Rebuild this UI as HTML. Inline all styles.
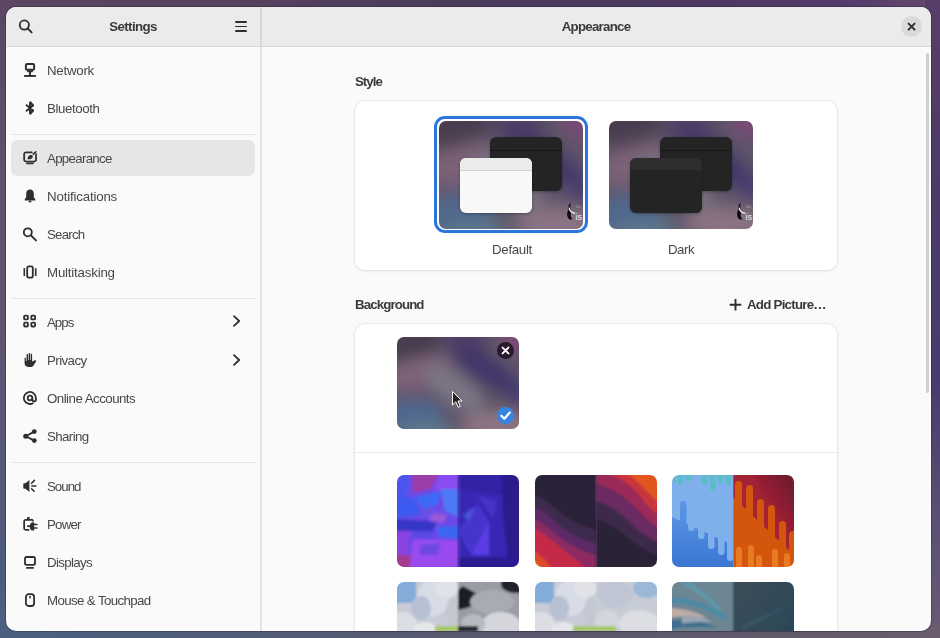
<!DOCTYPE html>
<html><head><meta charset="utf-8">
<style>
*{margin:0;padding:0;box-sizing:border-box}
html,body{width:940px;height:638px;overflow:hidden}
body{position:relative;font-family:"Liberation Sans",sans-serif;background:radial-gradient(ellipse 45% 40% at 22% 52%, rgba(140,100,130,.75), rgba(140,100,130,0) 100%),radial-gradient(ellipse 50% 40% at 18% 95%, rgba(70,120,160,.9), rgba(70,120,160,0) 100%),radial-gradient(ellipse 45% 45% at 85% 95%, rgba(150,120,135,.9), rgba(150,120,135,0) 100%),radial-gradient(ellipse 40% 45% at 80% 45%, rgba(60,50,110,.9), rgba(60,50,110,0) 100%),radial-gradient(ellipse 30% 25% at 95% 5%, rgba(140,80,120,.8), rgba(140,80,120,0) 100%),radial-gradient(ellipse 40% 30% at 60% 5%, rgba(90,55,110,.8), rgba(90,55,110,0) 100%),linear-gradient(135deg,#4a3c50 0%,#6a5870 40%,#6a6880 60%,#7a7088 100%)}
.abs{position:absolute}
.t{position:absolute;white-space:nowrap;color:#48484c;will-change:transform}
.card{position:absolute;background:#fff;border-radius:10px;box-shadow:0 0 0 1px rgba(0,0,6,.035),0 1px 3px 1px rgba(0,0,6,.05)}
</style></head><body>
<svg width="0" height="0" style="position:absolute"><defs><filter id="wblur" x="-20%" y="-20%" width="140%" height="140%"><feGaussianBlur stdDeviation="7"/></filter></defs></svg>
<div class="abs" style="left:0;top:0;width:940px;height:12px;background:linear-gradient(90deg,#5a4662 0%,#54425e 25%,#4a3a5a 50%,#4c3862 75%,#523c6a 90%,#66486e 100%)"></div><div class="abs" style="left:0;top:0;width:12px;height:638px;background:linear-gradient(180deg,#5a4662 0%,#62506c 30%,#5e5472 55%,#50587a 80%,#4a6080 100%)"></div><div class="abs" style="left:925px;top:0;width:15px;height:638px;background:linear-gradient(180deg,#583e6a 0%,#4c3a66 30%,#483c6c 60%,#5a4e74 80%,#6a5a72 100%)"></div><div class="abs" style="left:0;top:625px;width:940px;height:13px;background:linear-gradient(90deg,#4a6080 0%,#525c76 30%,#5a5a70 50%,#605a6c 75%,#6a5c6c 100%)"></div><div class="abs" style="left:6px;top:7px;width:925px;height:624px;border-radius:10px;background:#fafafa;overflow:hidden;box-shadow:0 0 0 1px rgba(20,10,30,.25)"><div class="abs" style="left:0;top:0;width:925px;height:39px;background:#ebebeb"></div><div class="abs" style="left:0;top:39px;width:925px;height:1px;background:#d9d9d9"></div><div class="abs" style="left:254px;top:0;width:2px;height:624px;background:#e4e4e4"></div><div class="abs" style="left:254px;top:0;width:2px;height:40px;background:#d8d8d8"></div></div><svg class="abs" style="left:16px;top:17px;width:18px;height:18px;" viewBox="0 0 18 18" fill="#2e2e32" stroke="#2e2e32"><circle cx="8.35" cy="8.05" r="4.6" fill="none" stroke-width="1.8"/><path d="M11.6 11.4 L15.6 15.4" stroke-width="2" stroke-linecap="round"/></svg><div class="abs" style="left:235px;top:21.2px;width:12px;height:1.9px;background:#2e2e32;border-radius:1px"></div><div class="abs" style="left:235px;top:25.5px;width:12px;height:1.9px;background:#2e2e32;border-radius:1px"></div><div class="abs" style="left:235px;top:29.8px;width:12px;height:1.9px;background:#2e2e32;border-radius:1px"></div><div class="t" style="top:16.89px;font-size:13.3px;line-height:20px;font-weight:bold;letter-spacing:-0.6px;color:#3a3a3d;left:-66.80000000000001px;width:400px;text-align:center;">Settings</div><div class="t" style="top:16.89px;font-size:13.3px;line-height:20px;font-weight:bold;letter-spacing:-0.75px;color:#3a3a3d;left:395.79999999999995px;width:400px;text-align:center;">Appearance</div><div class="abs" style="left:901px;top:16px;width:21px;height:21px;border-radius:50%;background:#dadada"></div><svg class="abs" style="left:903px;top:18px;width:17px;height:17px;" viewBox="0 0 17 17" fill="#2e2e32" stroke="#2e2e32"><path d="M5.6 5.6 L11.6 11.6 M11.6 5.6 L5.6 11.6" stroke-width="2" stroke-linecap="round" fill="none"/></svg><div class="abs" style="left:11px;top:140px;width:244px;height:36px;border-radius:6px;background:#e6e6e6"></div><div class="abs" style="left:12px;top:134px;width:243px;height:1px;background:#e4e4e4"></div><div class="abs" style="left:12px;top:298px;width:243px;height:1px;background:#e4e4e4"></div><div class="abs" style="left:12px;top:462px;width:243px;height:1px;background:#e4e4e4"></div><div class="t" style="top:61.29px;font-size:13.3px;line-height:20px;letter-spacing:-0.25px;color:#48484c;left:47.4px;">Network</div><svg class="abs" style="left:22px;top:62px;width:16px;height:16px;" viewBox="0 0 16 16" fill="#2e2e32" stroke="#2e2e32"><rect x="3.9" y="2" width="8.2" height="5.8" rx="1.2" fill="none" stroke-width="2"/><path d="M4.8 8.4 H11.2 L10.6 10.2 H5.4 Z" stroke="none"/><rect x="7.1" y="9" width="1.9" height="4.5" stroke="none"/><rect x="2.1" y="13" width="11.8" height="1.9" stroke="none"/></svg><div class="t" style="top:99.09px;font-size:13.3px;line-height:20px;letter-spacing:-0.4px;color:#48484c;left:47.4px;">Bluetooth</div><svg class="abs" style="left:22px;top:100px;width:16px;height:16px;" viewBox="0 0 16 16" fill="#2e2e32" stroke="#2e2e32"><path d="M4.6 5.2 L11.2 10.6 L8.2 13.8 L8.2 2.2 L11.2 5.4 L4.6 10.8" fill="none" stroke-width="1.9" stroke-linejoin="round" stroke-linecap="round"/><path d="M8.2 2.6 V13.4" stroke-width="2.4"/></svg><div class="t" style="top:148.69px;font-size:13.3px;line-height:20px;letter-spacing:-0.7px;color:#48484c;left:47.4px;">Appearance</div><svg class="abs" style="left:22px;top:150px;width:16px;height:16px;" viewBox="0 0 16 16" fill="#2e2e32" stroke="#2e2e32"><path d="M9.8 2.25 H4 A1.85 1.85 0 0 0 2.15 4.1 V9.65 A1.85 1.85 0 0 0 4 11.5 H12.2 A1.85 1.85 0 0 0 14.05 9.65 V4.2" fill="none" stroke-width="1.75" stroke-linecap="round"/><rect x="4.1" y="12.7" width="7.7" height="1.45" rx=".7" stroke="none"/><path d="M5.6 9.3 C5.4 6.8 6.9 4.9 9 4.9 C10.6 4.9 11.2 6.2 10.6 7.4 C9.9 8.9 7.6 9.5 5.6 9.3 Z" stroke="none"/><path d="M11.3 4.1 L13.8 1.9" stroke-width="1.6" stroke-linecap="round"/></svg><div class="t" style="top:186.79px;font-size:13.3px;line-height:20px;letter-spacing:-0.18px;color:#48484c;left:47.4px;">Notifications</div><svg class="abs" style="left:22px;top:188px;width:16px;height:16px;" viewBox="0 0 16 16" fill="#2e2e32" stroke="#2e2e32"><path d="M8 1.5 C5.5 1.5 4.2 3.4 4.2 5.8 V9.3 L2.7 11.3 V12.6 H13.3 V11.3 L11.8 9.3 V5.8 C11.8 3.4 10.5 1.5 8 1.5Z" stroke="none"/><ellipse cx="8" cy="13.5" rx="1.5" ry=".9" stroke="none"/></svg><div class="t" style="top:224.99px;font-size:13.3px;line-height:20px;letter-spacing:-0.8px;color:#48484c;left:47.4px;">Search</div><svg class="abs" style="left:22px;top:226px;width:16px;height:16px;" viewBox="0 0 16 16" fill="#2e2e32" stroke="#2e2e32"><circle cx="5.8" cy="6.3" r="4" fill="none" stroke-width="1.8"/><path d="M8.9 9.4 L14 14.4" stroke-width="2" stroke-linecap="round"/></svg><div class="t" style="top:262.99px;font-size:13.3px;line-height:20px;letter-spacing:-0.2px;color:#48484c;left:47.4px;">Multitasking</div><svg class="abs" style="left:22px;top:264px;width:16px;height:16px;" viewBox="0 0 16 16" fill="#2e2e32" stroke="#2e2e32"><rect x="5.2" y="2.4" width="5.6" height="11.3" rx="1.6" fill="none" stroke-width="1.8"/><rect x="1.5" y="4.2" width="1.6" height="7.8" stroke="none"/><rect x="12.9" y="4.2" width="1.6" height="7.8" stroke="none"/></svg><div class="t" style="top:312.99px;font-size:13.3px;line-height:20px;letter-spacing:-1.0px;color:#48484c;left:47.4px;">Apps</div><svg class="abs" style="left:22px;top:314px;width:16px;height:16px;" viewBox="0 0 16 16" fill="#2e2e32" stroke="#2e2e32"><rect x="2.1" y="1.6" width="3.8" height="3.8" rx="1" fill="none" stroke-width="1.8"/><rect x="9.3" y="1.6" width="3.8" height="3.8" rx="1" fill="none" stroke-width="1.8"/><rect x="2.1" y="8.7" width="3.8" height="3.8" rx="1" fill="none" stroke-width="1.8"/><rect x="9.3" y="8.7" width="3.8" height="3.8" rx="1" fill="none" stroke-width="1.8"/></svg><div class="t" style="top:350.99px;font-size:13.3px;line-height:20px;letter-spacing:-0.58px;color:#48484c;left:47.4px;">Privacy</div><svg class="abs" style="left:22px;top:352px;width:16px;height:16px;" viewBox="0 0 16 16" fill="#2e2e32" stroke="#2e2e32"><path d="M2.6 6 C2.6 5.2 3.9 5.2 3.9 6 V9 H4.6 V2.6 C4.6 1.8 6 1.8 6 2.6 V8 H6.6 V1.6 C6.6 0.7 8.1 0.7 8.1 1.6 V8 H8.7 V2.4 C8.7 1.6 10.1 1.6 10.1 2.4 V9.6 L12.3 8.4 C13.3 7.9 14.6 8.6 14 9.5 L11.5 13.4 C10.7 14.5 9.7 14.9 8.4 14.9 H6.3 C4 14.9 2.6 13.5 2.6 11.3 Z" stroke="none"/></svg><div class="t" style="top:388.79px;font-size:13.3px;line-height:20px;letter-spacing:-0.53px;color:#48484c;left:47.4px;">Online Accounts</div><svg class="abs" style="left:22px;top:390px;width:16px;height:16px;" viewBox="0 0 16 16" fill="#2e2e32" stroke="#2e2e32"><path d="M11.3 12.9 A6 6 0 1 1 13.9 8 V9.4 C13.9 10.6 13.2 11.3 12.2 11.3 C11.2 11.3 10.4 10.6 10.4 9.4 V8" fill="none" stroke-width="1.8"/><circle cx="8" cy="8" r="2.3" fill="none" stroke-width="1.8"/></svg><div class="t" style="top:427.19px;font-size:13.3px;line-height:20px;letter-spacing:-0.6px;color:#48484c;left:47.4px;">Sharing</div><svg class="abs" style="left:22px;top:428px;width:16px;height:16px;" viewBox="0 0 16 16" fill="#2e2e32" stroke="#2e2e32"><path d="M3.8 8.2 L12.2 3.6 M3.8 8.2 L12.2 12.6" fill="none" stroke-width="1.8"/><circle cx="3.7" cy="8.2" r="2.5" stroke="none"/><circle cx="12.3" cy="3.6" r="2.4" stroke="none"/><circle cx="12.3" cy="12.6" r="2.4" stroke="none"/></svg><div class="t" style="top:476.79px;font-size:13.3px;line-height:20px;letter-spacing:-1.0px;color:#48484c;left:47.4px;">Sound</div><svg class="abs" style="left:22px;top:478px;width:16px;height:16px;" viewBox="0 0 16 16" fill="#2e2e32" stroke="#2e2e32"><path d="M1.3 6.3 C1.3 5.6 1.8 5.3 2.4 5.3 H3.5 L7.4 2 V14 L3.5 10.7 H2.4 C1.8 10.7 1.3 10.4 1.3 9.7 Z" stroke="none"/><path d="M9.6 5.2 L12.4 2.4 M9.8 8 H13.9 M9.6 10.8 L12 13.2" stroke-width="1.6" stroke-linecap="round" fill="none"/></svg><div class="t" style="top:514.79px;font-size:13.3px;line-height:20px;letter-spacing:-0.8px;color:#48484c;left:47.4px;">Power</div><svg class="abs" style="left:22px;top:516px;width:16px;height:16px;" viewBox="0 0 16 16" fill="#2e2e32" stroke="#2e2e32"><rect x="5" y="1.1" width="2.6" height="2" rx=".5" stroke="none"/><path d="M6.6 13.75 H3.6 A1.5 1.5 0 0 1 2.15 12.25 V5.2 A1.5 1.5 0 0 1 3.6 3.75 H9.2 A1.9 1.9 0 0 1 10.9 4.7" fill="none" stroke-width="1.75" stroke-linecap="round"/><path d="M12.1 6.2 V14.6 H11 C9 14.6 7.7 12.8 7.7 10.4 C7.7 8 9 6.2 11 6.2 Z" stroke="none"/><path d="M5 10.2 H8.5" stroke-width="1.6"/><path d="M12 8.5 H14.9 M12 12 H14.9" stroke-width="1.5" stroke-linecap="round"/></svg><div class="t" style="top:552.79px;font-size:13.3px;line-height:20px;letter-spacing:-0.64px;color:#48484c;left:47.4px;">Displays</div><svg class="abs" style="left:22px;top:554px;width:16px;height:16px;" viewBox="0 0 16 16" fill="#2e2e32" stroke="#2e2e32"><rect x="3" y="3" width="10" height="7.8" rx="1.6" fill="none" stroke-width="1.8"/><rect x="4" y="13" width="8" height="1.8" rx=".9" stroke="none"/></svg><div class="t" style="top:590.79px;font-size:13.3px;line-height:20px;letter-spacing:-0.63px;color:#48484c;left:47.4px;">Mouse &amp; Touchpad</div><svg class="abs" style="left:22px;top:592px;width:16px;height:16px;" viewBox="0 0 16 16" fill="#2e2e32" stroke="#2e2e32"><rect x="3.9" y="2.2" width="8.2" height="11.8" rx="2.8" fill="none" stroke-width="1.8"/><rect x="7.3" y="3.8" width="1.4" height="2.6" rx=".5" stroke="none"/></svg><svg class="abs" style="left:228px;top:313px;width:16px;height:16px;" viewBox="0 0 16 16" fill="#2e2e32" stroke="#2e2e32"><path d="M6 3.2 L11.2 8 L6 12.8" fill="none" stroke-width="1.8" stroke-linecap="round" stroke-linejoin="round"/></svg><svg class="abs" style="left:228px;top:352px;width:16px;height:16px;" viewBox="0 0 16 16" fill="#2e2e32" stroke="#2e2e32"><path d="M6 3.2 L11.2 8 L6 12.8" fill="none" stroke-width="1.8" stroke-linecap="round" stroke-linejoin="round"/></svg><div class="t" style="top:72.39px;font-size:13.3px;line-height:20px;font-weight:bold;letter-spacing:-1.0px;color:#3a3a3d;left:355.1px;">Style</div><div class="card" style="left:355px;top:101px;width:482px;height:169px"></div><div class="abs" style="left:434px;top:116px;width:154px;height:117px;border:3px solid #2a76dc;border-radius:11px"></div><div class="abs" style="left:439px;top:121px;width:144px;height:108px;border-radius:7px;overflow:hidden"><svg class="abs" style="left:0;top:0;width:144px;height:108px" viewBox="0 0 120 90" preserveAspectRatio="none"><g filter="url(#wblur)"><rect x="-20" y="-20" width="160" height="130" fill="#5e5468"/>
<ellipse cx="5" cy="0" rx="40" ry="22" fill="#483e50"/>
<ellipse cx="22" cy="36" rx="34" ry="16" fill="#7c6278" transform="rotate(-15 22 36)"/>
<ellipse cx="56" cy="52" rx="34" ry="14" fill="#7a7484" transform="rotate(35 58 52)"/>
<ellipse cx="86" cy="30" rx="46" ry="13" fill="#40366a" transform="rotate(36 86 30)"/>
<ellipse cx="68" cy="4" rx="22" ry="10" fill="#4e3a66"/>
<ellipse cx="120" cy="0" rx="18" ry="14" fill="#7a4a78"/>
<ellipse cx="10" cy="78" rx="36" ry="16" fill="#50688e" transform="rotate(-8 10 78)"/>
<ellipse cx="30" cy="92" rx="28" ry="8" fill="#5e7c8c"/>
<ellipse cx="98" cy="86" rx="34" ry="14" fill="#8c7484"/>
<ellipse cx="120" cy="55" rx="10" ry="14" fill="#4a3e70"/></g></svg><div class="abs" style="left:51px;top:16px;width:72px;height:54px;border-radius:6px;background:#242424;box-shadow:0 1px 3px rgba(0,0,0,.3)"><div class="abs" style="left:0;top:12.5px;width:72px;height:1px;background:#151515"></div></div><div class="abs" style="left:21px;top:37px;width:72px;height:55px;border-radius:6px;background:#f8f8f8;box-shadow:0 1px 3px rgba(0,0,0,.3)"><div class="abs" style="left:0;top:0;width:72px;height:13px;background:#ebebeb;border-radius:6px 6px 0 0;border-bottom:1px solid #d0d0d0"></div></div><svg class="abs" style="left:127px;top:80px;width:17px;height:22px" viewBox="0 0 17 22"><path d="M4.6 1.5 C2.6 3.5 2 6.5 2.6 8.6 C1 10.8 0.6 14 1.8 16.4 C2.8 18.3 4.8 19 6.6 18.4 C4.6 16.4 4 13.4 5.4 11.2 C4.2 9 4 5.8 4.6 1.5 Z" fill="#0e0a10"/><path d="M3.2 6.6 C3.4 9.6 5.6 11.8 9.2 12.4" stroke="#f0f0f0" stroke-width="1.2" fill="none"/><text x="9.6" y="18.6" font-size="9" fill="#eee" font-family="Liberation Sans">is</text><text x="10" y="7" font-size="3.5" fill="#bbb" font-family="Liberation Sans">Os</text></svg></div><div class="abs" style="left:609px;top:121px;width:144px;height:108px;border-radius:7px;overflow:hidden"><svg class="abs" style="left:0;top:0;width:144px;height:108px" viewBox="0 0 120 90" preserveAspectRatio="none"><g filter="url(#wblur)"><rect x="-20" y="-20" width="160" height="130" fill="#5e5468"/>
<ellipse cx="5" cy="0" rx="40" ry="22" fill="#483e50"/>
<ellipse cx="22" cy="36" rx="34" ry="16" fill="#7c6278" transform="rotate(-15 22 36)"/>
<ellipse cx="56" cy="52" rx="34" ry="14" fill="#7a7484" transform="rotate(35 58 52)"/>
<ellipse cx="86" cy="30" rx="46" ry="13" fill="#40366a" transform="rotate(36 86 30)"/>
<ellipse cx="68" cy="4" rx="22" ry="10" fill="#4e3a66"/>
<ellipse cx="120" cy="0" rx="18" ry="14" fill="#7a4a78"/>
<ellipse cx="10" cy="78" rx="36" ry="16" fill="#50688e" transform="rotate(-8 10 78)"/>
<ellipse cx="30" cy="92" rx="28" ry="8" fill="#5e7c8c"/>
<ellipse cx="98" cy="86" rx="34" ry="14" fill="#8c7484"/>
<ellipse cx="120" cy="55" rx="10" ry="14" fill="#4a3e70"/></g></svg><div class="abs" style="left:51px;top:16px;width:72px;height:54px;border-radius:6px;background:#242424;box-shadow:0 1px 3px rgba(0,0,0,.3)"><div class="abs" style="left:0;top:12.5px;width:72px;height:1px;background:#151515"></div></div><div class="abs" style="left:21px;top:37px;width:72px;height:55px;border-radius:6px;background:#242424;box-shadow:0 1px 3px rgba(0,0,0,.3)"><div class="abs" style="left:0;top:0;width:72px;height:12px;background:#2e2e2e;border-radius:6px 6px 0 0"></div></div><svg class="abs" style="left:127px;top:80px;width:17px;height:22px" viewBox="0 0 17 22"><path d="M4.6 1.5 C2.6 3.5 2 6.5 2.6 8.6 C1 10.8 0.6 14 1.8 16.4 C2.8 18.3 4.8 19 6.6 18.4 C4.6 16.4 4 13.4 5.4 11.2 C4.2 9 4 5.8 4.6 1.5 Z" fill="#0e0a10"/><path d="M3.2 6.6 C3.4 9.6 5.6 11.8 9.2 12.4" stroke="#f0f0f0" stroke-width="1.2" fill="none"/><text x="9.6" y="18.6" font-size="9" fill="#eee" font-family="Liberation Sans">is</text><text x="10" y="7" font-size="3.5" fill="#bbb" font-family="Liberation Sans">Os</text></svg></div><div class="t" style="top:240.39px;font-size:13.3px;line-height:20px;letter-spacing:-0.3px;color:#48484c;left:311.5px;width:400px;text-align:center;">Default</div><div class="t" style="top:240.39px;font-size:13.3px;line-height:20px;letter-spacing:-0.5px;color:#48484c;left:481px;width:400px;text-align:center;">Dark</div><div class="t" style="top:295.09px;font-size:13.3px;line-height:20px;font-weight:bold;letter-spacing:-0.9px;color:#3a3a3d;left:355.2px;">Background</div><svg class="abs" style="left:728px;top:297px;width:15px;height:15px;" viewBox="0 0 15 15" fill="#2e2e32" stroke="#2e2e32"><path d="M7.5 2 V13.6 M1.7 7.8 H13.3" stroke-width="1.9" fill="none"/></svg><div class="t" style="top:295.09px;font-size:13.3px;line-height:20px;font-weight:bold;letter-spacing:-0.75px;color:#3a3a3d;left:747.4px;">Add Picture…</div><div class="card" style="left:355px;top:324px;width:482px;height:307px;border-radius:10px 10px 0 0"></div><div class="abs" style="left:355px;top:452px;width:482px;height:1px;background:#ebebeb"></div><div class="abs" style="left:397px;top:337px;width:122px;height:92px;border-radius:7px;overflow:hidden"><svg class="abs" style="left:0;top:0;width:122px;height:92px" viewBox="0 0 120 90" preserveAspectRatio="none"><g filter="url(#wblur)"><rect x="-20" y="-20" width="160" height="130" fill="#5e5468"/>
<ellipse cx="5" cy="0" rx="40" ry="22" fill="#483e50"/>
<ellipse cx="22" cy="36" rx="34" ry="16" fill="#7c6278" transform="rotate(-15 22 36)"/>
<ellipse cx="56" cy="52" rx="34" ry="14" fill="#7a7484" transform="rotate(35 58 52)"/>
<ellipse cx="86" cy="30" rx="46" ry="13" fill="#40366a" transform="rotate(36 86 30)"/>
<ellipse cx="68" cy="4" rx="22" ry="10" fill="#4e3a66"/>
<ellipse cx="120" cy="0" rx="18" ry="14" fill="#7a4a78"/>
<ellipse cx="10" cy="78" rx="36" ry="16" fill="#50688e" transform="rotate(-8 10 78)"/>
<ellipse cx="30" cy="92" rx="28" ry="8" fill="#5e7c8c"/>
<ellipse cx="98" cy="86" rx="34" ry="14" fill="#8c7484"/>
<ellipse cx="120" cy="55" rx="10" ry="14" fill="#4a3e70"/></g></svg><svg class="abs" style="left:104px;top:64px;width:18px;height:22px" viewBox="0 0 18 22"><text x="2" y="10" font-size="6" fill="#ddd" font-family="Liberation Sans">is</text></svg></div><div class="abs" style="left:496.5px;top:341.9px;width:17px;height:17px;border-radius:50%;background:#2a1a2c"></div><svg class="abs" style="left:496.5px;top:341.9px;width:17px;height:17px;" viewBox="0 0 17 17" fill="#2e2e32" stroke="#2e2e32"><path d="M5.6 5.6 L11.4 11.4 M11.4 5.6 L5.6 11.4" stroke="#fff" stroke-width="2" stroke-linecap="round" fill="none"/></svg><div class="abs" style="left:496.5px;top:406.8px;width:17px;height:17px;border-radius:50%;background:#3584e4"></div><svg class="abs" style="left:496.5px;top:406.8px;width:17px;height:17px;" viewBox="0 0 17 17" fill="#2e2e32" stroke="#2e2e32"><path d="M4.3 8.8 L7.3 11.8 L12.8 5.6" stroke="#fff" stroke-width="2.2" stroke-linecap="round" stroke-linejoin="round" fill="none"/></svg><svg class="abs" style="left:451px;top:390px;width:12px;height:20px;" viewBox="0 0 12 20" fill="#2e2e32" stroke="#2e2e32"><path d="M1.5 1.5 V15 L4.8 11.8 L7.3 17.3 L9.3 16.4 L6.9 11 H11 Z" fill="#222" stroke="#fff" stroke-width="1"/></svg><div class="abs" style="left:397px;top:475px;width:122px;height:92px;border-radius:7px;overflow:hidden"><svg width="122" height="92" viewBox="0 0 122 92" style="display:block"><defs><filter id="b1" x="-10%" y="-10%" width="120%" height="120%"><feGaussianBlur stdDeviation="1.4"/></filter></defs>
<g filter="url(#b1)">
<rect x="-5" y="-5" width="70" height="102" fill="#6a4ae8"/>
<polygon points="-5,-5 14,-5 10,22 -5,26" fill="#4a56ee"/>
<polygon points="14,-5 44,-5 34,14 16,18" fill="#9c3ca8"/>
<polygon points="44,-5 66,-5 66,14 36,16" fill="#8a4cf0"/>
<polygon points="-5,24 18,22 24,40 -5,44" fill="#3c5af0"/>
<polygon points="18,22 44,16 40,30 26,34" fill="#3a6af6"/>
<polygon points="44,14 66,14 66,44 48,36" fill="#4c7af4"/>
<polygon points="26,34 48,36 44,44 24,42" fill="#6a50e4"/>
<polygon points="-5,44 40,46 36,56 -5,56" fill="#3434c8"/>
<polygon points="36,38 50,40 46,48 32,46" fill="#9a58d8"/>
<polygon points="40,52 66,50 66,64 42,62" fill="#3a66f2"/>
<polygon points="14,56 40,56 34,66 10,66" fill="#5a4ae6"/>
<polygon points="-5,56 14,56 10,80 -5,80" fill="#8a42e0"/>
<polygon points="-5,80 16,80 12,97 -5,97" fill="#a43a90"/>
<polygon points="16,64 66,66 66,97 12,97" fill="#9a4cf0"/>
<polygon points="24,70 44,68 40,80 22,80" fill="#6a48e0"/>
<rect x="61" y="-5" width="66" height="102" fill="#3828b4"/>
<polygon points="61,-5 127,-5 127,22 61,14" fill="#3024a4"/>
<polygon points="104,-5 127,-5 127,97 112,97 106,40" fill="#2a1a8a"/>
<polygon points="74,80 92,46 92,80" fill="#5a3ee4"/>
<polygon points="61,56 80,28 92,46 74,80" fill="#4434cc"/>
<polygon points="61,82 127,82 127,97 61,97" fill="#2c1c90"/>
<polygon points="66,40 78,32 72,46" fill="#4a56d8"/>
<polygon points="80,20 100,26 96,44" fill="#4632c8"/>
</g>
<rect x="61" y="0" width="0.7" height="92" fill="#2a2090" opacity=".6"/></svg></div><div class="abs" style="left:534.5px;top:475px;width:122px;height:92px;border-radius:7px;overflow:hidden"><svg width="122" height="92" viewBox="0 0 122 92" style="display:block"><defs><filter id="b2" x="-10%" y="-10%" width="120%" height="120%"><feGaussianBlur stdDeviation="1.0"/></filter></defs>
<g filter="url(#b2)">
<rect x="-5" y="-5" width="70" height="102" fill="#2c2438"/>
<path d="M-5 18 C8 22 16 30 26 38 C36 46 48 52 66 56 V97 H-5Z" fill="#3c2a4e"/>
<path d="M-5 30 C8 34 16 42 24 50 C34 58 46 66 66 70 V97 H-5Z" fill="#5c2c66"/>
<path d="M-5 42 C6 46 14 54 22 60 C32 68 44 76 66 82 V97 H-5Z" fill="#8e2c62"/>
<path d="M-5 52 C6 56 12 62 20 68 C30 76 40 84 56 97 H-5Z" fill="#c42c46"/>
<path d="M-5 74 C4 78 10 84 14 90 L18 97 H-5Z" fill="#dc4a2c"/>
<path d="M-5 82 C0 84 4 88 8 97 H-5Z" fill="#e6641c"/>
<rect x="61" y="-5" width="66" height="102" fill="#2a2234"/>
<path d="M61 -5 H127 V82 C112 78 100 68 90 60 C80 52 70 46 61 44Z" fill="#3e2a4c"/>
<path d="M61 -5 H127 V68 C112 64 102 54 94 46 C86 38 74 30 61 26Z" fill="#6a2c62"/>
<path d="M61 -5 H127 V54 C116 50 108 40 100 32 C92 24 80 14 61 8Z" fill="#9a2a58"/>
<path d="M72 -5 H127 V42 C118 38 110 28 104 20 C98 12 88 4 72 -2Z" fill="#c8343e"/>
<path d="M84 -5 H127 V30 C120 26 112 16 104 8 C98 2 92 -2 84 -4Z" fill="#e0561e"/>
</g>
<rect x="61" y="0" width="0.8" height="92" fill="#6a4a7a" opacity=".5"/></svg></div><div class="abs" style="left:672px;top:475px;width:122px;height:92px;border-radius:7px;overflow:hidden"><svg width="122" height="92" viewBox="0 0 122 92" style="display:block"><defs><filter id="b3" x="-10%" y="-10%" width="120%" height="120%"><feGaussianBlur stdDeviation="0.6"/></filter>
<linearGradient id="g3a" gradientUnits="userSpaceOnUse" x1="0" y1="30" x2="0" y2="92"><stop offset="0" stop-color="#5a96e6"/><stop offset="1" stop-color="#3a76d2"/></linearGradient>
<linearGradient id="g3b" x1="0" y1="1" x2="1" y2="0"><stop offset="0" stop-color="#c02838"/><stop offset=".6" stop-color="#a02034"/><stop offset="1" stop-color="#5a1a2c"/></linearGradient>
<linearGradient id="g3c" x1="0" y1="0" x2="0" y2="1"><stop offset="0" stop-color="#d8580e"/><stop offset="1" stop-color="#e0581a"/></linearGradient>
</defs>
<g filter="url(#b3)">
<rect x="-5" y="-5" width="70" height="102" fill="#80b0ec"/><path d="M-5 40 L61 70 V97 H-5Z" fill="url(#g3a)"/><rect x="8" y="26" width="6.5" height="130" rx="3.25" fill="url(#g3a)"/><rect x="16" y="-74" width="6.5" height="130" rx="3.25" fill="#80b0ec"/><rect x="26" y="-66" width="6.5" height="130" rx="3.25" fill="#80b0ec"/><rect x="36" y="-56" width="6.5" height="130" rx="3.25" fill="#80b0ec"/><rect x="46" y="-50" width="6.5" height="130" rx="3.25" fill="#80b0ec"/><rect x="55" y="-44" width="6.5" height="130" rx="3.25" fill="#80b0ec"/><rect x="-2" y="-122" width="5.5" height="130" rx="2.75" fill="#5cbcc8"/><rect x="6" y="-120" width="5.5" height="130" rx="2.75" fill="#5cbcc8"/><rect x="14" y="-124" width="5.5" height="130" rx="2.75" fill="#5cbcc8"/><rect x="30" y="-120" width="5.5" height="130" rx="2.75" fill="#5cbcc8"/><rect x="38" y="-114" width="5.5" height="130" rx="2.75" fill="#5cbcc8"/><rect x="46" y="-122" width="5.5" height="130" rx="2.75" fill="#5cbcc8"/><rect x="54" y="-120" width="5.5" height="130" rx="2.75" fill="#5cbcc8"/><rect x="61" y="-5" width="66" height="102" fill="url(#g3b)"/>
<path d="M61 22 L122 80 V97 H61Z" fill="#d4560e"/><rect x="63" y="6" width="7" height="130" rx="3.5" fill="#d4560e"/><rect x="74" y="10" width="7" height="130" rx="3.5" fill="#d4560e"/><rect x="85" y="24" width="7" height="130" rx="3.5" fill="#d4560e"/><rect x="96" y="30" width="7" height="130" rx="3.5" fill="#d4560e"/><rect x="107" y="46" width="7" height="130" rx="3.5" fill="#d4560e"/><rect x="117" y="56" width="7" height="130" rx="3.5" fill="#d4560e"/><rect x="64" y="72" width="6" height="130" rx="3.0" fill="#e87a22"/><rect x="76" y="70" width="6" height="130" rx="3.0" fill="#e87a22"/><rect x="84" y="80" width="6" height="130" rx="3.0" fill="#e87a22"/><rect x="100" y="74" width="6" height="130" rx="3.0" fill="#e87a22"/><rect x="112" y="78" width="6" height="130" rx="3.0" fill="#e87a22"/></g><rect x="61" y="0" width="0.8" height="92" fill="#fff" opacity=".2"/></svg></div><div class="abs" style="left:397px;top:582px;width:122px;height:49px;border-radius:7px 7px 0 0;overflow:hidden"><svg width="122" height="92" viewBox="0 0 122 92" style="display:block"><defs><filter id="b4" x="-10%" y="-10%" width="120%" height="120%"><feGaussianBlur stdDeviation="1.3"/></filter></defs><g filter="url(#b4)"><rect x="-5" y="-5" width="70" height="102" fill="#c8ccd6"/>
<rect x="-5" y="-5" width="24" height="26" fill="#84acd8"/>
<ellipse cx="36" cy="16" rx="16" ry="18" fill="#d8dce6"/>
<ellipse cx="24" cy="26" rx="10" ry="12" fill="#b8c0d4"/>
<ellipse cx="50" cy="6" rx="12" ry="10" fill="#e0e2e8"/>
<ellipse cx="6" cy="42" rx="14" ry="12" fill="#dcdee4"/>
<ellipse cx="28" cy="48" rx="12" ry="8" fill="#e4e6ea"/>
<ellipse cx="56" cy="30" rx="7" ry="14" fill="#c4c8d0"/>
<rect x="38" y="44" width="23" height="6" fill="#a8c870"/><rect x="61" y="-5" width="66" height="102" fill="#9a9ca6"/>
<polygon points="61,8 66,4 80,12 84,20 70,26 61,28" fill="#1c1c26"/>
<ellipse cx="118" cy="2" rx="14" ry="9" fill="#20202c"/>
<ellipse cx="95" cy="20" rx="22" ry="12" fill="#a8aab4"/>
<ellipse cx="104" cy="44" rx="20" ry="14" fill="#d4d6dc"/>
<ellipse cx="76" cy="42" rx="12" ry="10" fill="#b8bac2"/>
<rect x="61" y="44" width="20" height="6" fill="#2a2a34"/>
</g></svg></div><div class="abs" style="left:534.5px;top:582px;width:122px;height:49px;border-radius:7px 7px 0 0;overflow:hidden"><svg width="122" height="92" viewBox="0 0 122 92" style="display:block"><defs><filter id="b5" x="-10%" y="-10%" width="120%" height="120%"><feGaussianBlur stdDeviation="1.3"/></filter></defs><g filter="url(#b5)"><rect x="-5" y="-5" width="70" height="102" fill="#c8ccd6"/>
<rect x="-5" y="-5" width="24" height="26" fill="#84acd8"/>
<ellipse cx="36" cy="16" rx="16" ry="18" fill="#d8dce6"/>
<ellipse cx="24" cy="26" rx="10" ry="12" fill="#b8c0d4"/>
<ellipse cx="50" cy="6" rx="12" ry="10" fill="#e0e2e8"/>
<ellipse cx="6" cy="42" rx="14" ry="12" fill="#dcdee4"/>
<ellipse cx="28" cy="48" rx="12" ry="8" fill="#e4e6ea"/>
<ellipse cx="56" cy="30" rx="7" ry="14" fill="#c4c8d0"/>
<rect x="38" y="44" width="40" height="6" fill="#a8c870"/><rect x="61" y="-5" width="66" height="102" fill="#c8ccd6"/>
<ellipse cx="80" cy="12" rx="18" ry="14" fill="#c0c6d4"/>
<ellipse cx="112" cy="6" rx="14" ry="10" fill="#9ab8d8"/>
<ellipse cx="104" cy="42" rx="20" ry="14" fill="#dcdee4"/>
<ellipse cx="72" cy="40" rx="12" ry="12" fill="#d4d6dc"/>
<rect x="61" y="44" width="20" height="6" fill="#a8c870"/>
</g></svg></div><div class="abs" style="left:672px;top:582px;width:122px;height:49px;border-radius:7px 7px 0 0;overflow:hidden"><svg width="122" height="92" viewBox="0 0 122 92" style="display:block"><defs><filter id="b6" x="-10%" y="-10%" width="120%" height="120%"><feGaussianBlur stdDeviation="1.0"/></filter>
<linearGradient id="g6" x1="0" y1="0" x2="1" y2="1"><stop offset="0" stop-color="#3e4e58"/><stop offset=".6" stop-color="#2e4858"/><stop offset="1" stop-color="#224460"/></linearGradient></defs><g filter="url(#b6)">
<rect x="-5" y="-5" width="70" height="102" fill="#6c8694"/>
<path d="M10 -5 C25 5 40 15 50 28 L46 30 C36 18 22 8 4 -2Z" fill="#5e98aa"/>
<path d="M-5 16 C15 14 35 20 55 34 L52 38 C34 26 15 20 -5 22Z" fill="#4e8aa4"/>
<path d="M-5 26 C10 26 25 30 35 36 C20 34 8 34 -5 36Z" fill="#c0aaa4"/>
<path d="M-5 40 C10 36 30 38 45 46 C30 44 10 44 -5 48Z" fill="#3e6e90"/>
<path d="M10 34 C20 32 30 34 40 40 C28 40 18 40 10 42Z" fill="#9aa4b0"/>
<rect x="61" y="-5" width="66" height="102" fill="url(#g6)"/>
<path d="M70 44 C85 36 100 30 115 24 C100 34 85 42 70 48Z" fill="#3a5a6a" opacity=".7"/>
</g></svg></div><div class="abs" style="left:926px;top:53px;width:3px;height:340px;border-radius:2px;background:#cfcfcf"></div>
<div class="abs" style="left:0;top:631px;width:940px;height:7px;background:transparent"></div>
</body></html>
